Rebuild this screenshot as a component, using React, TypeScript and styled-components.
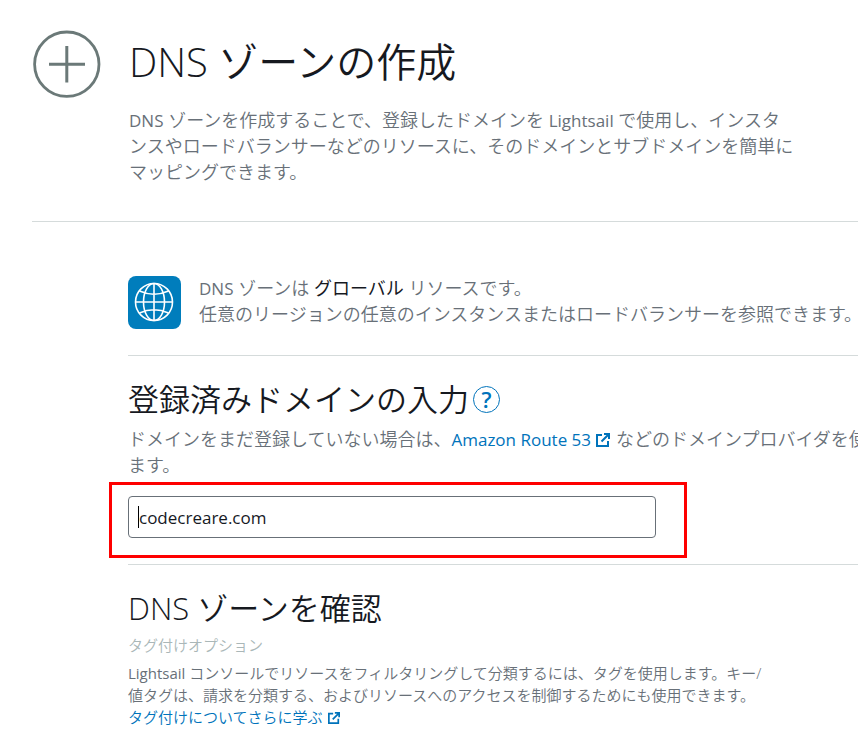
import React from "react";
import styled, { createGlobalStyle } from "styled-components";

const Global = createGlobalStyle`
  * { box-sizing: border-box; }
  body {
    margin: 0;
    background: #fff;
    overflow-x: hidden;
    color: #687078;
    font-family: "Open Sans", "Noto Sans CJK JP", sans-serif;
  }
  h1, h2, p { margin: 0; font-weight: 350; }
`;

const Page = styled.main`
  padding: 29px 0 0 32px;
  overflow: hidden;
`;

const Header = styled.header`
  display: grid;
  grid-template-columns: 70px minmax(0, 668px);
  column-gap: 27px;
  padding-bottom: 36px;
  border-bottom: 1px solid #d5dbdb;
`;

const PlusIcon = styled.svg`
  width: 70px;
  height: 70px;
`;

const Title = styled.h1`
  font-size: 40px;
  line-height: 66px;
  color: #16191f;
`;

const ThinLatin = styled.span`
  font-weight: 300;
`;

const Latin = styled.span<{ $size: number }>`
  font-weight: 400;
  font-size: ${(p) => p.$size}px;
  line-height: 1;
`;

const Text = styled.p`
  font-size: 18px;
  line-height: 26px;
`;

const Lead = styled(Text)`
  margin-top: 12px;
`;

const Body = styled.div`
  padding-left: 96px;
`;

const Notice = styled.section`
  display: flex;
  align-items: flex-end;
  gap: 18px;
  padding: 53px 0 26px;
  border-bottom: 1px solid #d5dbdb;
  white-space: nowrap;
`;

const NoticeText = styled(Text)`
  padding-bottom: 2px;
`;

const GlobeIcon = styled.svg`
  flex: none;
  width: 53px;
  height: 53px;
`;

const Section = styled.section`
  padding: 23px 0 26px;
  border-bottom: 1px solid #d5dbdb;
`;

const LastSection = styled(Section)`
  padding-bottom: 0;
  border-bottom: 0;
`;

const Heading = styled.h2`
  display: flex;
  align-items: center;
  gap: 4px;
  font-size: 31px;
  line-height: 40px;
  color: #16191f;
`;

const HelpButton = styled.button`
  width: 27px;
  height: 27px;
  padding: 0;
  border: 1px solid #0073bb;
  border-radius: 50%;
  background: none;
  color: #0073bb;
  font: 600 22px/25px "Open Sans", sans-serif;
`;

const DomainText = styled(Text)`
  margin-top: 7px;
  white-space: nowrap;
`;

const Strong = styled.strong`
  font-weight: 400;
  color: #16191f;
`;

const Link = styled.a`
  color: #0073bb;
  text-decoration: none;
`;

const LinkIcon = styled.svg<{ $size: number }>`
  width: ${(p) => p.$size}px;
  height: ${(p) => p.$size}px;
  margin: 0 6px 0 5px;
  vertical-align: -1px;
`;

const Field = styled.div`
  position: relative;
  max-width: 528px;
  margin-top: 18px;

  &::before {
    content: "";
    position: absolute;
    inset: -14px -31px -20px -19px;
    border: 3px solid #fe0000;
    pointer-events: none;
  }

  &::after {
    content: "";
    position: absolute;
    left: 10px;
    top: 10px;
    width: 1px;
    height: 22px;
    background: #000;
  }
`;

const Input = styled.input`
  display: block;
  width: 100%;
  height: 42px;
  padding: 0 10px;
  border: 1px solid #687078;
  border-radius: 4px;
  background: #fff;
  color: #16191f;
  font: 400 17px "Open Sans", sans-serif;
`;

const SubLabel = styled.p`
  margin-top: 6px;
  font-size: 15px;
  line-height: 22px;
  color: #aab7b8;
`;

const SmallText = styled.p`
  max-width: 640px;
  margin-top: 6px;
  font-size: 15px;
  line-height: 22px;
`;

function ExternalIcon({ size }: { size: number }) {
  return (
    <LinkIcon $size={size} viewBox="0 0 14 14" fill="none" stroke="currentColor" strokeWidth="2" aria-hidden="true">
      <path d="M6 2H1v11h11V8" />
      <path d="M8 1h5v5M12.5 1.5L5.5 8.5" />
    </LinkIcon>
  );
}

export default function App() {
  return (
    <>
      <Global />
      <Page>
        <Header>
          <PlusIcon viewBox="0 0 70 70" fill="none" stroke="#6b7978" aria-hidden="true">
            <circle cx="34.8" cy="35.2" r="32.2" strokeWidth="2.8" />
            <path d="M34.8 17v36.5M17 35.3h36" strokeWidth="3" />
          </PlusIcon>
          <div>
            <Title><ThinLatin>DNS</ThinLatin> ゾーンの作成</Title>
            <Lead>
              <Latin $size={17}>DNS</Latin> ゾーンを作成することで、登録したドメインを <Latin $size={17}>Lightsail</Latin> で使用し、インスタンスやロードバランサーなどのリソースに、そのドメインとサブドメインを簡単にマッピングできます。
            </Lead>
          </div>
        </Header>
        <Body>
          <Notice>
            <GlobeIcon viewBox="0 0 53 53" fill="none" stroke="#fff" strokeWidth="1.6" aria-hidden="true">
              <rect width="53" height="53" rx="8" fill="#007dbc" stroke="none" />
              <circle cx="26" cy="26" r="18.5" />
              <ellipse cx="26" cy="26" rx="10.5" ry="18.5" />
              <path d="M26 7.5v37M7.5 26h37M11.5 15q14.5 6.5 29 0M11.5 37q14.5-6.5 29 0" />
            </GlobeIcon>
            <NoticeText>
              <Latin $size={17}>DNS</Latin> ゾーンは <Strong>グローバル</Strong> リソースです。
              <br />
              任意のリージョンの任意のインスタンスまたはロードバランサーを参照できます。
            </NoticeText>
          </Notice>
          <Section>
            <Heading>
              <label htmlFor="domain">登録済みドメインの入力</label>
              <HelpButton type="button">?</HelpButton>
            </Heading>
            <DomainText>
              ドメインをまだ登録していない場合は、
              <Link href="#route53"><Latin $size={17}>Amazon Route 53</Latin><ExternalIcon size={14} /></Link>
              などのドメインプロバイダを使
              <br />
              ます。
            </DomainText>
            <Field>
              <Input id="domain" type="text" defaultValue="codecreare.com" />
            </Field>
          </Section>
          <LastSection>
            <Heading><span><ThinLatin>DNS</ThinLatin> ゾーンを確認</span></Heading>
            <SubLabel>タグ付けオプション</SubLabel>
            <SmallText>
              <Latin $size={15}>Lightsail</Latin> コンソールでリソースをフィルタリングして分類するには、タグを使用します。キー/値タグは、請求を分類する、およびリソースへのアクセスを制御するためにも使用できます。
              <br />
              <Link href="#tags">タグ付けについてさらに学ぶ<ExternalIcon size={12} /></Link>
            </SmallText>
          </LastSection>
        </Body>
      </Page>
    </>
  );
}
